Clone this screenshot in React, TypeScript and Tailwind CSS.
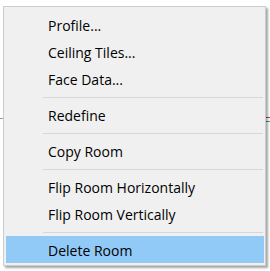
type Entry = { label: string; active?: boolean } | 'sep'

const entries: Entry[] = [
  { label: 'Profile...' },
  { label: 'Ceiling Tiles...' },
  { label: 'Face Data...' },
  'sep',
  { label: 'Redefine' },
  'sep',
  { label: 'Copy Room' },
  'sep',
  { label: 'Flip Room Horizontally' },
  { label: 'Flip Room Vertically' },
  'sep',
  { label: 'Delete Room', active: true },
]

export default function App() {
  return (
    <div className="relative h-[271px] w-[270px] overflow-hidden bg-white pl-[3px] pt-[6px] font-['Open_Sans','Noto_Sans',sans-serif]">
      {/* bits of the drawing behind the menu */}
      <div className="absolute left-0 top-[118px] h-px w-[4px] bg-[#8a9ab0]" />
      <div className="absolute right-0 top-[117px] h-px w-[4px] bg-[#b04040]" />
      <div className="absolute right-0 top-[121px] h-px w-[4px] bg-[#3a9aa0]" />

      <div className="relative w-[263px] border border-[#cccccc] bg-[#f0f0f0] pb-[2px] pl-[2px] pr-[1px] pt-[4px] shadow-[2px_2px_2px_rgba(0,0,0,0.35)]">
        {entries.map((e, i) =>
          e === 'sep' ? (
            <div key={i} className="flex h-[9px] items-end pb-[3px] pl-[37px] pr-[1px]">
              <div className="h-px w-full bg-[#d7d7d7]" />
            </div>
          ) : (
            <div
              key={i}
              className={
                'flex h-[27px] items-center pl-[42px] pt-[2px] text-[14px] text-black ' +
                (e.active ? 'bg-[#91c9f7]' : '')
              }
            >
              {e.label}
            </div>
          ),
        )}
      </div>
    </div>
  )
}
